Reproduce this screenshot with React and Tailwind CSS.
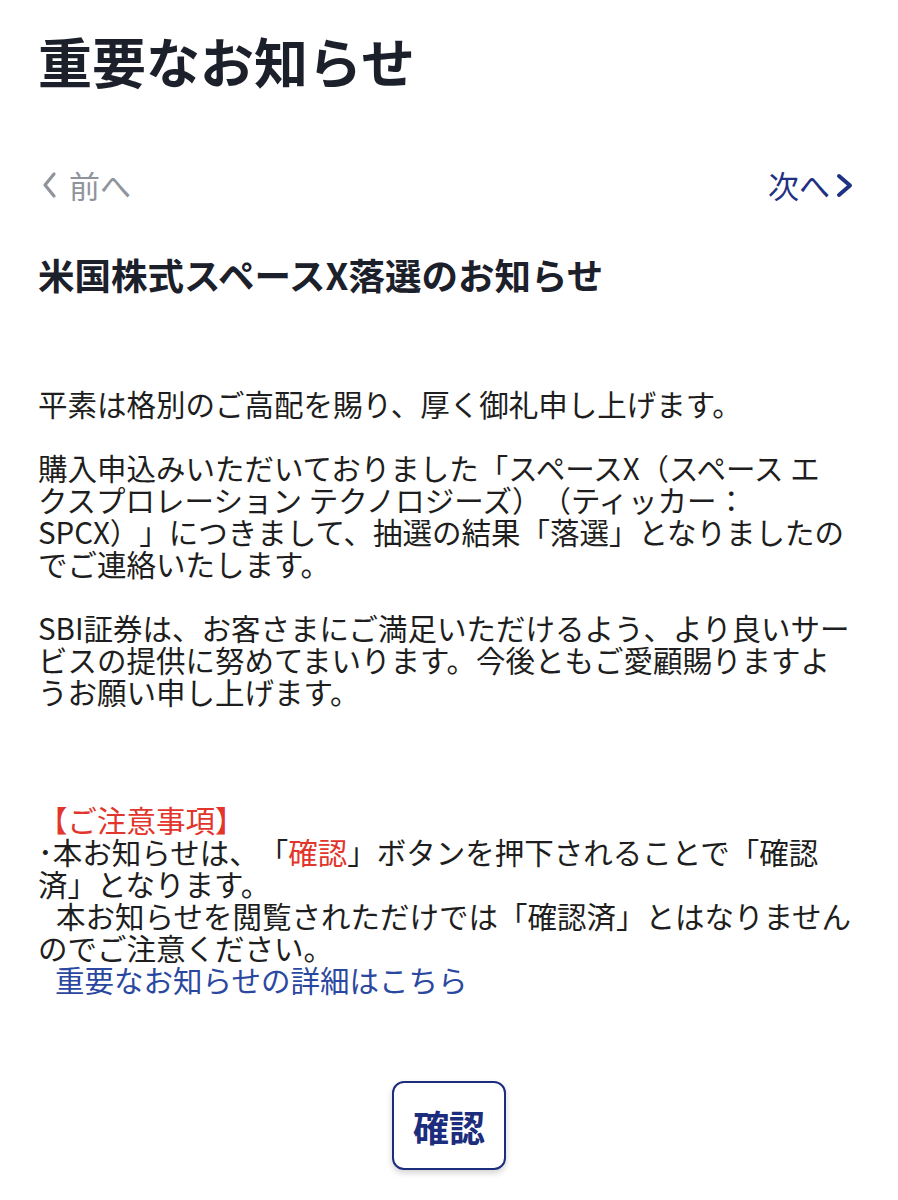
import React from "react";

function ChevronLeft() {
  return (
    <svg width="20" height="28" viewBox="0 0 20 28" fill="none" className="shrink-0">
      <path d="M16 3 L7 14 L16 25" stroke="#8f949c" strokeWidth="3.2" strokeLinecap="round" strokeLinejoin="round" />
    </svg>
  );
}

function ChevronRight() {
  return (
    <svg width="18" height="28" viewBox="0 0 18 28" fill="none" className="shrink-0">
      <path d="M3 5 L14 14.5 L3 24" stroke="#1f3182" strokeWidth="4" strokeLinecap="round" strokeLinejoin="round" />
    </svg>
  );
}

export default function App() {
  return (
    <div className="w-[898px] min-h-[1200px] bg-white px-[38px] pb-[28px] font-['Noto_Sans_CJK_JP','Noto_Sans',sans-serif] [text-spacing-trim:space-all]">
      <h1 className="pt-[29px] text-[54px] leading-[64px] font-bold text-[#1b202b] whitespace-nowrap">
        重要なお知らせ
      </h1>

      <div className="mt-[76px] flex items-center justify-between h-[32px]">
        <div className="flex items-center gap-[11px]">
          <ChevronLeft />
          <span className="text-[31px] leading-[32px] text-[#8f949c]">前へ</span>
        </div>
        <div className="flex items-center gap-[6px] mr-[6px]">
          <span className="text-[31px] leading-[32px] text-[#1f3182]">次へ</span>
          <ChevronRight />
        </div>
      </div>

      <h2 className="mt-[52px] text-[36.5px] leading-[44px] font-bold text-[#1b202b] whitespace-nowrap">
        米国株式スペースX落選のお知らせ
      </h2>

      <div className="mt-[90px] text-[29.5px] leading-[32px] text-[#1e1e20] whitespace-nowrap">
        平素は格別のご高配を賜り、厚く御礼申し上げます。
        <br />
        <br />
        購入申込みいただいておりました「スペースX（スペース エ
        <br />
        クスプロレーション テクノロジーズ）（ティッカー：
        <br />
        SPCX）」につきまして、抽選の結果「落選」となりましたの
        <br />
        でご連絡いたします。
        <br />
        <br />
        SBI証券は、お客さまにご満足いただけるよう、より良いサー
        <br />
        ビスの提供に努めてまいります。今後ともご愛顧賜りますよ
        <br />
        うお願い申し上げます。
        <br />
        <br />
        <br />
        <br />
        <span className="text-[#e2352b]">【ご注意事項】</span>
        <br />
        ･本お知らせは、「<span className="text-[#e2352b]">確認</span>」ボタンを押下されることで「確認
        <br />
        済」となります。
        <br />
        <span className="pl-[18px]">本お知らせを閲覧されただけでは「確認済」とはなりません</span>
        <br />
        のでご注意ください。
        <br />
        <span className="pl-[17px] text-[#2b48a0]">重要なお知らせの詳細はこちら</span>
      </div>

      <div className="mt-[86px] flex justify-center">
        <button className="w-[114px] h-[89px] rounded-[12px] border-2 border-[#1b2d7c] bg-white shadow-[0_3px_6px_rgba(0,0,0,0.18)] flex items-center justify-center text-[36px] leading-none font-bold text-[#1b2d7c]">
          確認
        </button>
      </div>
    </div>
  );
}
